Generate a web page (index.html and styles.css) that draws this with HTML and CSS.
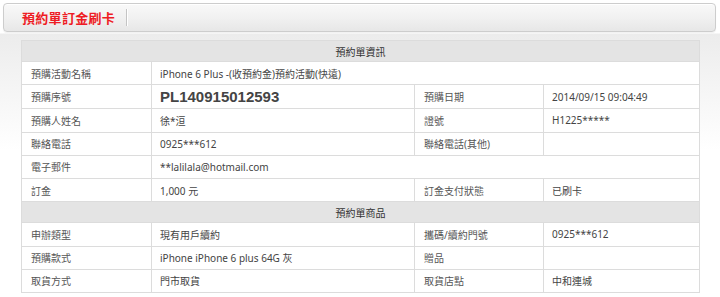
FILE: index.html
```html
<!DOCTYPE html>
<html lang="zh-Hant">
<head>
    <meta charset="UTF-8">
    <meta name="viewport" content="width=device-width, initial-scale=1.0">
    <title>預約單訂金刷卡</title>
    <link rel="stylesheet" href="styles.css">
</head>
<body>
    <div class="title-bar">
        <h2 class="title">預約單訂金刷卡</h2>
        <span class="title-sep"></span>
    </div>

    <div class="content">
        <table class="order-table">
            <colgroup>
                <col class="col-label">
                <col class="col-value">
                <col class="col-label2">
                <col class="col-value2">
            </colgroup>
            <tr>
                <th colspan="4">預約單資訊</th>
            </tr>
            <tr>
                <td class="label">預購活動名稱</td>
                <td colspan="3">iPhone 6 Plus -(收預約金)預約活動(快遠)</td>
            </tr>
            <tr class="serial-row">
                <td class="label">預購序號</td>
                <td class="serial">PL140915012593</td>
                <td class="label">預購日期</td>
                <td>2014/09/15 09:04:49</td>
            </tr>
            <tr>
                <td class="label">預購人姓名</td>
                <td>徐*洹</td>
                <td class="label">證號</td>
                <td>H1225*****</td>
            </tr>
            <tr>
                <td class="label">聯絡電話</td>
                <td>0925***612</td>
                <td class="label">聯絡電話(其他)</td>
                <td></td>
            </tr>
            <tr>
                <td class="label">電子郵件</td>
                <td colspan="3">**lalilala@hotmail.com</td>
            </tr>
            <tr>
                <td class="label">訂金</td>
                <td>1,000 元</td>
                <td class="label">訂金支付狀態</td>
                <td>已刷卡</td>
            </tr>
            <tr>
                <th colspan="4">預約單商品</th>
            </tr>
            <tr>
                <td class="label">申辦類型</td>
                <td>現有用戶續約</td>
                <td class="label">攜碼/續約門號</td>
                <td>0925***612</td>
            </tr>
            <tr>
                <td class="label">預購款式</td>
                <td>iPhone iPhone 6 plus 64G 灰</td>
                <td class="label">贈品</td>
                <td></td>
            </tr>
            <tr>
                <td class="label">取貨方式</td>
                <td>門市取貨</td>
                <td class="label">取貨店點</td>
                <td>中和連城</td>
            </tr>
        </table>
    </div>
</body>
</html>
```

FILE: styles.css
```css
body {
    margin: 0;
    padding: 3px 4px 0 3px;
    font-family: "Noto Sans", "Noto Sans CJK TC", sans-serif;
    font-size: 10px;
    color: #333;
    background: linear-gradient(to bottom, #fff 0, #fff 33px, #ececec 34px, #fff 150px);
    min-height: 294px;
}
.title-bar {
    display: flex;
    align-items: center;
    height: 27px;
    border: 1px solid #cdcdcd;
    border-radius: 4px;
    background: linear-gradient(to bottom, #f9f9f9 0, #f0f0f0 55%, #e7e7e7 100%);
    box-shadow: inset 0 1px 0 #fff, 0 1px 1px rgba(0, 0, 0, 0.06);
}
.title {
    margin: 0 0 0 18px;
    font-family: "Noto Sans CJK TC", sans-serif;
    font-size: 13px;
    font-weight: bold;
    letter-spacing: 0.3px;
    color: #ee1c24;
    line-height: 1;
}
.title-sep {
    width: 1px;
    height: 17px;
    margin-left: 11px;
    background: #c4c4c4;
    box-shadow: 1px 0 0 #fff;
}
.content {
    padding: 8px 17px 0 18px;
}
.order-table {
    width: 678px;
    border-collapse: collapse;
    table-layout: fixed;
    background: #fff;
}
.col-label { width: 130px; }
.col-value { width: 263px; }
.col-label2 { width: 129px; }
.col-value2 { width: 156px; }
.order-table th,
.order-table td {
    border: 1px solid #dcdcdc;
    padding: 0 8px;
    text-align: left;
    white-space: nowrap;
}
.order-table th {
    height: 20px;
    background: #e4e4e4;
    text-align: center;
    font-weight: normal;
    color: #333;
}
.order-table td {
    height: 22.25px;
    color: #444;
}
.order-table td.label {
    padding-left: 9px;
    color: #555;
}
.serial-row td {
    height: 23px;
}
.order-table td.serial {
    font-family: "Liberation Sans", sans-serif;
    font-size: 15px;
    font-weight: bold;
    color: #444;
}
```
